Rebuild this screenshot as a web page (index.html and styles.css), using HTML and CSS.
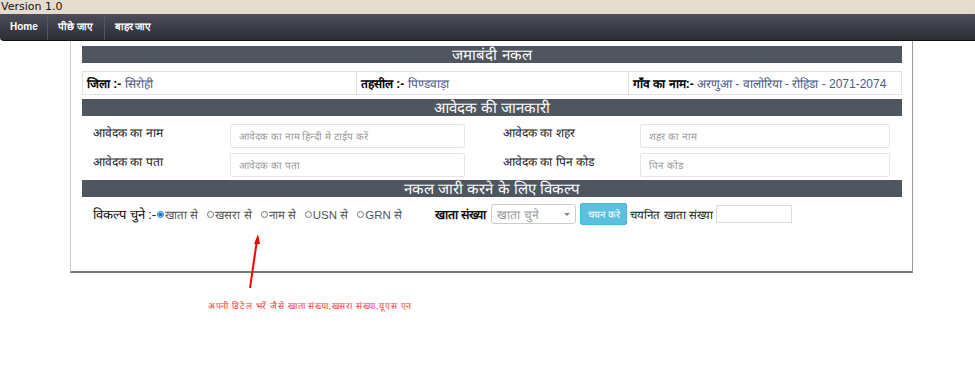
FILE: index.html
```html
<!DOCTYPE html>
<html lang="hi">

<head>
  <meta charset="UTF-8" />
  <title>जमाबंदी नकल</title>
  <link rel="stylesheet" href="styles.css">
</head>

<body>
  <div class="page">
    <div class="version">Version 1.0</div>

    <div class="navbar">
      <a class="nav-item home" href="#">Home</a>
      <a class="nav-item" href="#">पीछे जाए</a>
      <a class="nav-item" href="#">बाहर जाए</a>
    </div>

    <div class="container">
      <div class="panel">
        <div class="panel-head">जमाबंदी नकल</div>
        <table class="info-table">
          <tr>
            <td><b>जिला :-</b> <span class="val">सिरोही</span></td>
            <td><b>तहसील :-</b> <span class="val">पिण्डवाड़ा</span></td>
            <td><b>गाँव का नाम:-</b> <span class="val">अरणुआ - वालोरिया - रोहिडा - 2071-2074</span></td>
          </tr>
        </table>

        <div class="panel-head">आवेदक की जानकारी</div>
        <div class="form-grid">
          <label class="lbl">आवेदक का नाम</label>
          <input class="txt" type="text" placeholder="आवेदक का नाम हिन्दी मे टाईप करें" />
          <label class="lbl">आवेदक का शहर</label>
          <input class="txt" type="text" placeholder="शहर का नाम" />
          <label class="lbl">आवेदक का पता</label>
          <input class="txt" type="text" placeholder="आवेदक का पता" />
          <label class="lbl">आवेदक का पिन कोड</label>
          <input class="txt" type="text" placeholder="पिन कोड" />
        </div>

        <div class="panel-head">नकल जारी करने के लिए विकल्प</div>
        <div class="options">
          <div class="radios">
            <span class="opt-title">विकल्प चुने :-</span>
            <label class="radio"><input type="radio" name="opt" checked />खाता से</label>
            <label class="radio"><input type="radio" name="opt" />खसरा से</label>
            <label class="radio"><input type="radio" name="opt" />नाम से</label>
            <label class="radio"><input type="radio" name="opt" />USN से</label>
            <label class="radio"><input type="radio" name="opt" />GRN से</label>
          </div>

          <div class="khata-box">
            <span class="opt-title khata">खाता संख्या</span>
            <div class="select">
              <span>खाता चुने</span>
              <span class="caret"></span>
            </div>
            <button class="btn-select">चयन करे</button>
            <span class="chosen">चयनित खाता संख्या</span>
            <input class="small-txt" type="text" />
          </div>
        </div>
      </div>
    </div>

    <!-- annotation drawn over the page -->
    <svg class="arrow" width="20" height="60" viewBox="0 0 20 60">
      <line x1="5" y1="56" x2="12" y2="8" stroke="#f00" stroke-width="2" />
      <polygon points="13,2 9,12 15,12" fill="#f00" />
    </svg>
    <div class="note">अपनी डिटेल भरें जैसे खाता संख्या,खसरा संख्या,यूएस एन</div>
  </div>
</body>

</html>
```

FILE: styles.css
```css
* {
  box-sizing: border-box;
}

body {
  margin: 0;
  font-family: "Liberation Sans", Arial, sans-serif;
  background: #fff;
  color: #333;
}

.page {
  position: relative;
  min-height: 376px;
}

.version {
  height: 14px;
  background: #e6dccd;
  font-family: "DejaVu Sans", sans-serif;
  font-size: 11px;
  line-height: 14px;
  color: #111;
  padding-left: 1px;
}

.navbar {
  height: 27px;
  display: flex;
  align-items: center;
  background: linear-gradient(#4d4e5a, #2b2c34);
  border-bottom: 1px solid #111;
  border-bottom-left-radius: 4px;
}

.nav-item {
  color: #fff;
  text-decoration: none;
  font-size: 10px;
  font-weight: bold;
  padding: 0 11px 0 10px;
  line-height: 26px;
  border-right: 1px solid #555661;
}

.nav-item.home {
  padding-left: 10px;
  padding-right: 9px;
}

.nav-item:last-child {
  border-right: none;
}

.container {
  margin-left: 70px;
  width: 843px;
  height: 232px;
  border-left: 1px solid #ccc;
  border-right: 1px solid #999;
  border-bottom: 2px solid #777;
  padding: 5px 10px 0 11px;
}

.panel-head {
  background: #4f565f;
  color: #fff;
  text-align: center;
  font-size: 15px;
  height: 17px;
  line-height: 17px;
}

.info-table {
  width: 100%;
  border-collapse: collapse;
  margin: 8px 0 4px;
  font-size: 12px;
}

.info-table td {
  border: 1px solid #e2e2e2;
  height: 23px;
  padding: 0 4px;
  color: #000;
}

.info-table td:nth-child(1) {
  width: 274px;
}

.info-table td:nth-child(2) {
  width: 272px;
}

.val {
  color: #4c5a88;
}

.form-grid {
  display: grid;
  grid-template-columns: 137px 235px 175px 250px;
  row-gap: 5px;
  padding: 8px 0 3px 11px;
}

.form-grid .lbl:nth-of-type(even) {
  padding-left: 38px;
}

.lbl {
  font-size: 12px;
  color: #222;
  line-height: 16px;
  padding-top: 1px;
}

.txt {
  height: 24px;
  border: 1px solid #e6e6e6;
  border-radius: 2px;
  padding: 0 8px;
  font-family: inherit;
  font-size: 10px;
}

.txt::placeholder {
  color: #999;
}

.options {
  display: flex;
  align-items: center;
  padding: 6px 0 0 11px;
}

.radios {
  display: flex;
  align-items: center;
  width: 342px;
}

.opt-title {
  font-size: 13px;
  color: #111;
  margin-right: 1px;
}

.radio {
  display: flex;
  align-items: center;
  color: #555;
  font-size: 11.5px;
  margin-right: 9px;
}

.radio input {
  margin: 0 1px 0 0;
  width: 7px;
  height: 7px;
}

.khata-box {
  display: flex;
  align-items: center;
}

.opt-title.khata {
  margin-right: 5px;
  font-weight: bold;
  font-size: 12.5px;
}

.select {
  width: 85px;
  height: 20px;
  border: 1px solid #ccc;
  border-radius: 3px;
  display: flex;
  align-items: center;
  justify-content: space-between;
  padding: 0 5px;
  color: #999;
  font-size: 12px;
}

.caret {
  width: 0;
  height: 0;
  border-left: 3px solid transparent;
  border-right: 3px solid transparent;
  border-top: 3px solid #888;
}

.btn-select {
  margin-left: 4px;
  height: 22px;
  width: 47px;
  border: 1px solid #46b8da;
  border-radius: 2px;
  background: #5bc0de;
  color: #fff;
  font-family: inherit;
  font-size: 10px;
  padding: 0;
}

.chosen {
  margin-left: 3px;
  color: #222;
  font-size: 11.5px;
}

.small-txt {
  margin-left: 3px;
  width: 76px;
  height: 18px;
  border: 1px solid #ddd;
}

.arrow {
  position: absolute;
  left: 245px;
  top: 232px;
}

.note {
  position: absolute;
  left: 208px;
  top: 299px;
  color: #f33;
  font-size: 9px;
  letter-spacing: 0.7px;
}
```
